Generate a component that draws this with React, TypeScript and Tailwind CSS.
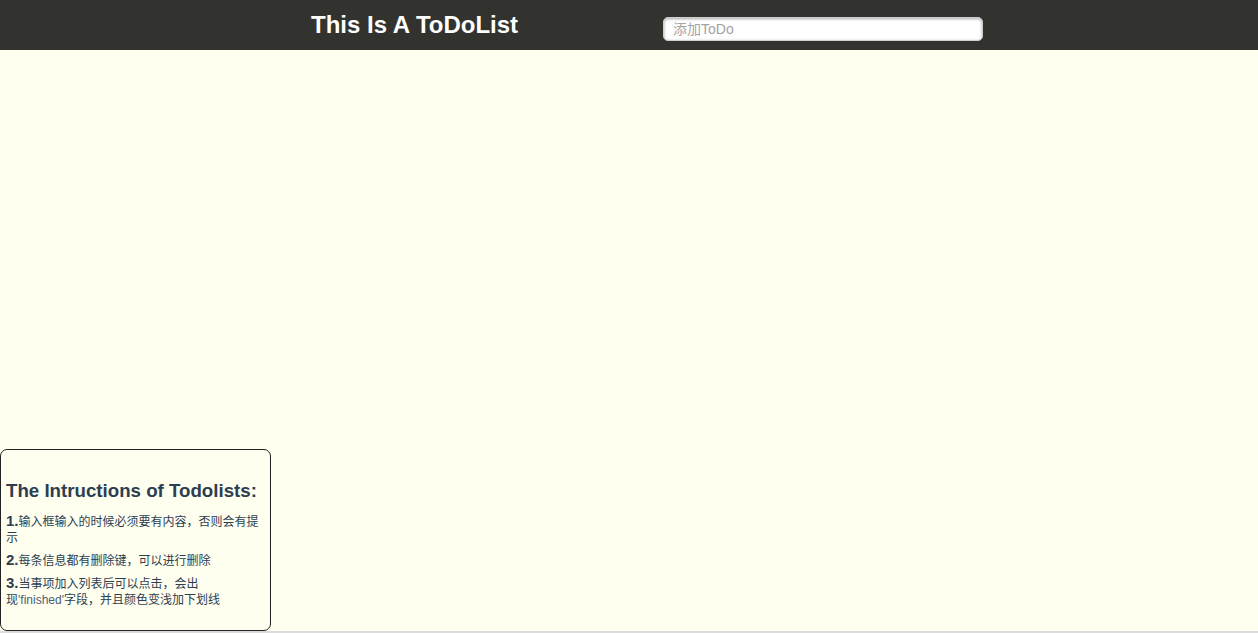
import React from "react";

const items: { n: string; text: React.ReactNode }[] = [
  { n: "1", text: "输入框输入的时候必须要有内容，否则会有提示" },
  { n: "2", text: "每条信息都有删除键，可以进行删除" },
  {
    n: "3",
    text: (
      <>
        当事项加入列表后可以点击，会出现<span className="text-[#4a5d78]">'finished'</span>字段，并且颜色变浅加下划线
      </>
    ),
  },
];

export default function App() {
  return (
    <div
      className="h-[633px] flex flex-col bg-[#fffff0] overflow-hidden"
      style={{ fontFamily: '"Liberation Sans", Arial, "Noto Sans CJK SC", sans-serif' }}
    >
      <header className="h-[50px] shrink-0 bg-[#32322e] flex items-center pl-[311px]">
        <div className="w-[352px]">
          <h1 className="text-[24px] font-bold text-white leading-none">This Is A ToDoList</h1>
        </div>
        <input
          type="text"
          placeholder="添加ToDo"
          className="w-[320px] h-[24px] mt-[8px] rounded-[5px] bg-white border border-[#cfcfcf] px-[9px] text-[14px] text-[#333] placeholder:text-[#a3a3a3] shadow-[inset_0_1px_3px_rgba(0,0,0,0.35)] outline-none"
        />
      </header>

      <main className="flex-1 flex items-end">
        <div className="w-[271px] h-[182px] border border-[#222] rounded-[7px] px-[5px] pt-[31px] text-[#2c3e50]">
          <h3 className="text-[18.7px] font-bold leading-[20px] mb-[12px]">The Intructions of Todolists:</h3>
          <ul className="flex flex-col gap-[6px]">
            {items.map((it) => (
              <li key={it.n} className="text-[12px] leading-[16px]">
                <span className="text-[15px] font-bold">{it.n}.</span>
                {it.text}
              </li>
            ))}
          </ul>
        </div>
      </main>

      <div className="h-[2px] shrink-0 bg-[#dcdcdc]" />
    </div>
  );
}
